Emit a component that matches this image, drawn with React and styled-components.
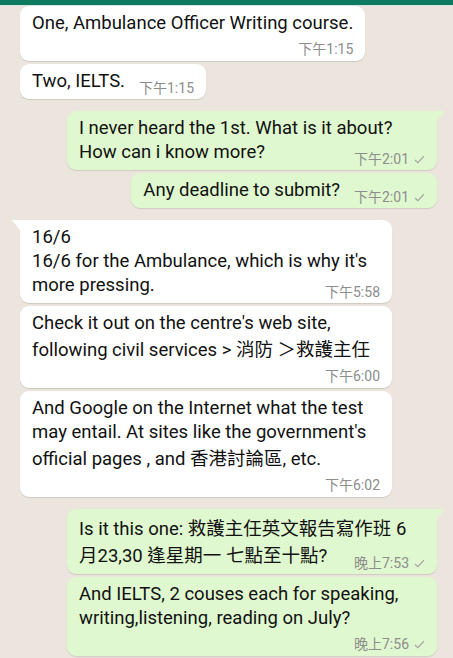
import React from 'react';
import styled, { createGlobalStyle, css } from 'styled-components';

const GlobalStyle = createGlobalStyle`
  body {
    margin: 0;
    background: #ece5dd;
    font-family: Roboto, "Noto Sans CJK TC", sans-serif;
  }
`;

const messages = [
  { lines: ['One, Ambulance Officer Writing course.'], time: '下午1:15' },
  { lines: ['Two, IELTS.'], time: '下午1:15', inline: true },
  {
    out: true, full: true, tail: true, inline: true,
    lines: ['I never heard the 1st. What is it about?', 'How can i know more?'],
    time: '下午2:01',
  },
  { out: true, inline: true, lines: ['Any deadline to submit?'], time: '下午2:01' },
  {
    full: true, tail: true, inline: true,
    lines: ['16/6', "16/6 for the Ambulance, which is why it's", 'more pressing.'],
    time: '下午5:58',
  },
  {
    full: true,
    lines: ["Check it out on the centre's web site,", 'following civil services > 消防 ＞救護主任'],
    time: '下午6:00',
  },
  {
    full: true,
    lines: [
      'And Google on the Internet what the test',
      "may entail. At sites like the government's",
      'official pages , and 香港討論區, etc.',
    ],
    time: '下午6:02',
  },
  {
    out: true, full: true, tail: true, inline: true,
    lines: ['Is it this one: 救護主任英文報告寫作班 6', '月23,30 逢星期一 七點至十點?'],
    time: '晚上7:53',
  },
  {
    out: true, full: true,
    lines: ['And IELTS, 2 couses each for speaking,', 'writing,listening, reading on July?'],
    time: '晚上7:56',
  },
];

// wrap runs of Chinese in their own span so the line grows like on the phone
function withHan(str) {
  return str.split(/([\u3000-\u9fff\uff00-\uffef]+)/).map((part, i) =>
    /[\u3000-\u9fff\uff00-\uffef]/.test(part) ? <Han key={i}>{part}</Han> : part
  );
}

function Tick() {
  return (
    <TickIcon viewBox="0 0 12 10">
      <path d="M1 5.6 L4.2 8.6 L11 1.2" />
    </TickIcon>
  );
}

function Message({ out, full, tail, inline, lines, time }) {
  const body = inline ? lines.slice(0, -1) : lines;
  const last = lines[lines.length - 1];
  const meta = (
    <Meta $inline={inline}>
      {time}
      {out && <Tick />}
    </Meta>
  );

  return (
    <Bubble $out={out} $full={full} $tail={tail}>
      {body.map((line, i) => (
        <Line key={i}>{withHan(line)}</Line>
      ))}
      {inline ? (
        <Row>
          <Line>{withHan(last)}</Line>
          {meta}
        </Row>
      ) : (
        <Footer>{meta}</Footer>
      )}
    </Bubble>
  );
}

export default function App() {
  return (
    <>
      <GlobalStyle />
      <Screen>
        <TopBar />
        <Feed>
          {messages.map((m, i) => {
            const prev = messages[i - 1];
            const gap = prev && !!prev.out !== !!m.out;
            return (
              <Slot key={i} $gap={gap}>
                <Message {...m} />
              </Slot>
            );
          })}
        </Feed>
      </Screen>
    </>
  );
}

const Screen = styled.div`
  width: 453px;
  height: 658px;
  overflow: hidden;
  background: #ece5dd;
  display: flex;
  flex-direction: column;
`;

const TopBar = styled.div`
  height: 5px;
  flex: none;
  background: #0e7a60;
  box-shadow: 0 1px 0 #d3e6de;
  position: relative;
  z-index: 1;
`;

const Feed = styled.div`
  display: flex;
  flex-direction: column;
  padding-top: 1px;
`;

const Slot = styled.div`
  display: flex;
  flex-direction: column;
  margin-top: ${(p) => (p.$gap ? '12px' : '3px')};
  &:first-child {
    margin-top: 0;
  }
`;

const Bubble = styled.div`
  position: relative;
  box-sizing: border-box;
  align-self: ${(p) => (p.$out ? 'flex-end' : 'flex-start')};
  margin: ${(p) => (p.$out ? '0 16px 0 0' : '0 0 0 20px')};
  width: ${(p) => (p.$full ? (p.$out ? '370px' : '372px') : 'fit-content')};
  padding: 5px 12px 4px 12px;
  background: ${(p) => (p.$out ? '#dff8cf' : '#ffffff')};
  border-radius: 9px;
  box-shadow: 0 1px 1px rgba(0, 0, 0, 0.12);
  color: #111111;

  ${(p) =>
    p.$tail &&
    css`
      border-top-${p.$out ? 'right' : 'left'}-radius: 0;
      &::before {
        content: '';
        position: absolute;
        top: 0;
        ${p.$out ? 'right: -8px;' : 'left: -8px;'}
        border-top: 10px solid ${p.$out ? '#dff8cf' : '#ffffff'};
        ${p.$out
          ? 'border-right: 8px solid transparent;'
          : 'border-left: 8px solid transparent;'}
      }
    `}
`;

const Line = styled.div`
  font-size: 18.5px;
  line-height: 24px;
  white-space: nowrap;
`;

const Han = styled.span`
  font-family: "Noto Sans CJK TC", sans-serif;
  line-height: 26px;
`;

const Row = styled.div`
  display: flex;
  align-items: flex-end;
  justify-content: space-between;
  gap: 14px;
  margin-bottom: 2px;
`;

const Footer = styled.div`
  display: flex;
  justify-content: flex-end;
  margin-top: 7px;
`;

const Meta = styled.span`
  display: inline-flex;
  align-items: center;
  gap: 5px;
  flex: none;
  font-size: 14px;
  line-height: 15px;
  color: #8d8d8d;
  white-space: nowrap;
  margin-bottom: ${(p) => (p.$inline ? '-3px' : '0')};
`;

const TickIcon = styled.svg`
  width: 11px;
  height: 9px;
  fill: none;
  stroke: #a3a3a3;
  stroke-width: 1.3;
`;
